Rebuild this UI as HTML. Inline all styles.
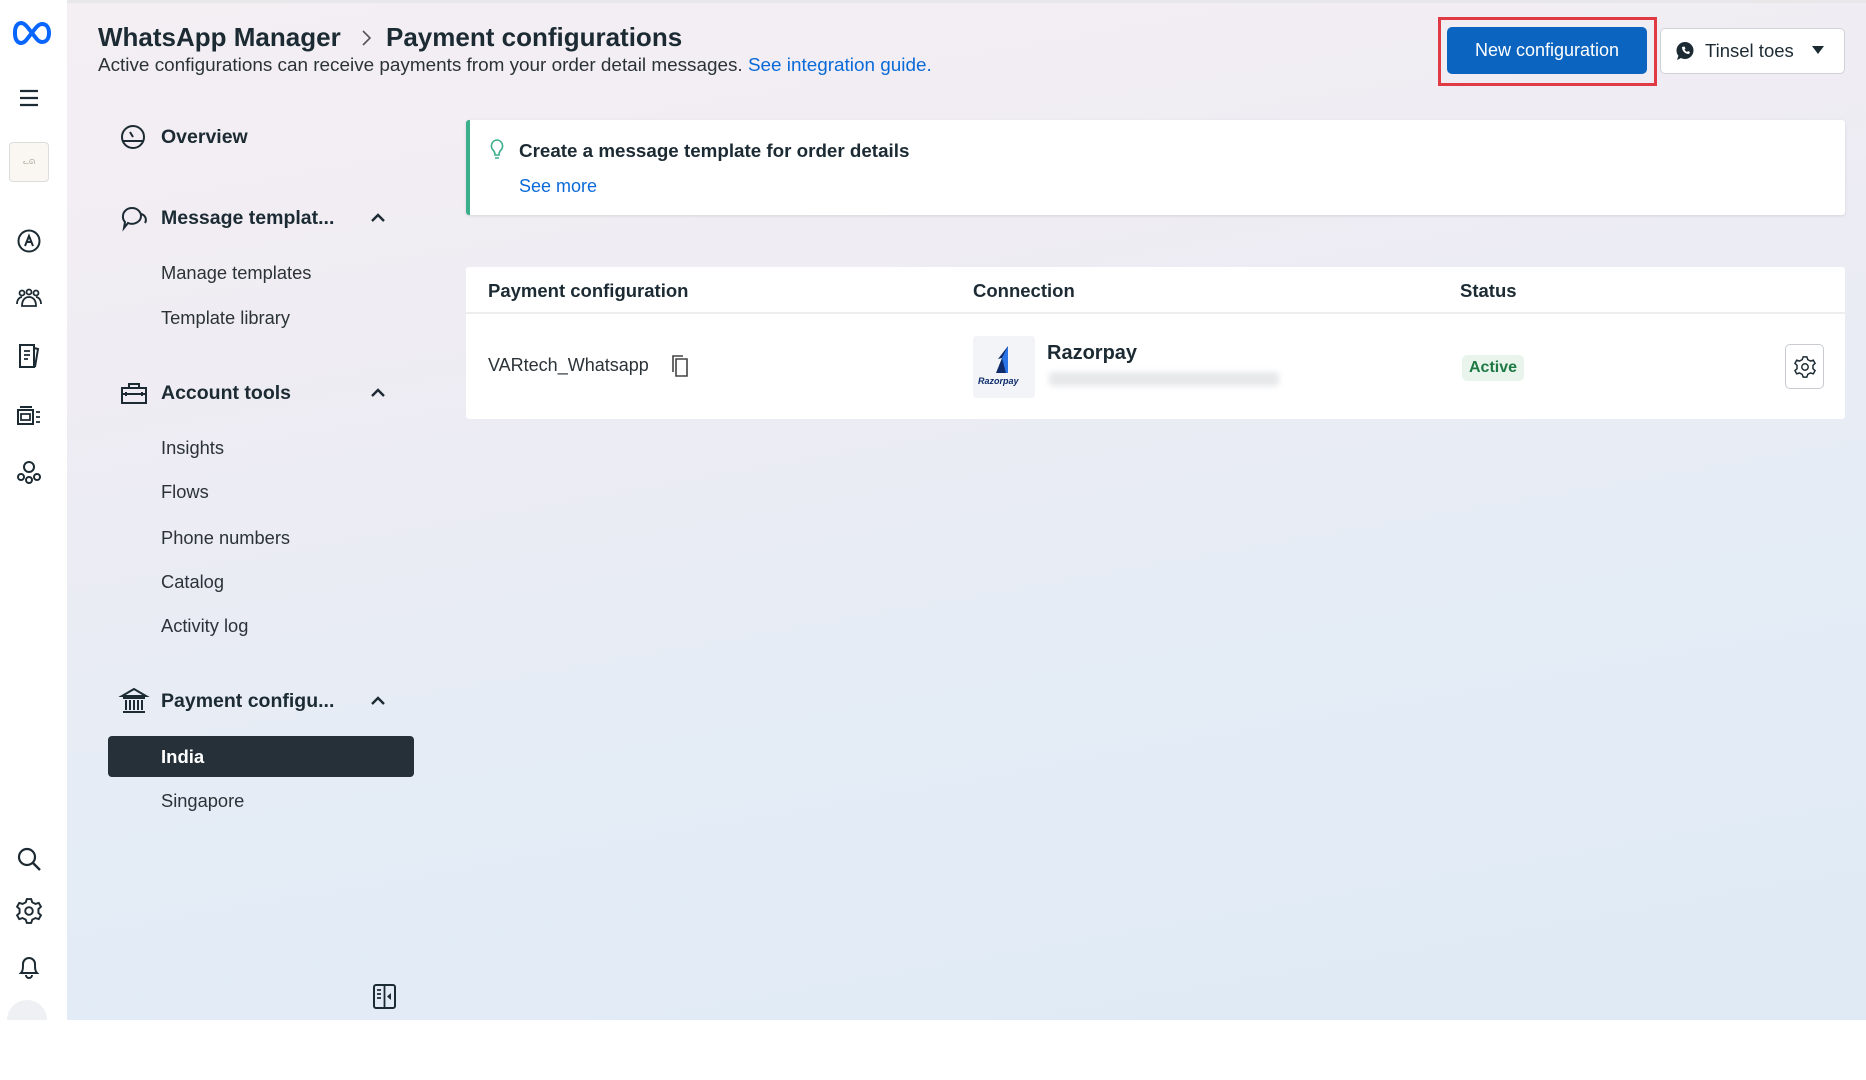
<!DOCTYPE html>
<html><head><meta charset="utf-8"><style>
*{margin:0;padding:0;box-sizing:border-box}
body{width:1866px;height:1080px;overflow:hidden;background:#fff;font-family:"Liberation Sans",sans-serif;color:#1c2b33;position:relative}
.main{position:absolute;left:67px;top:0;width:1799px;height:1020px;background:linear-gradient(170deg,#f4eff3 0%,#efecf3 30%,#e4ecf6 65%,#dfeaf5 100%)}
.topline{position:absolute;left:0;top:0;width:1866px;height:3px;background:#e8e8ea}
.rail{position:absolute;left:0;top:0;width:67px;height:1020px;background:#fff}
.a{position:absolute;white-space:nowrap}
.nav{font-size:18.3px;color:#2b3338}
.sec{font-size:19.5px;font-weight:bold;color:#1c2b33}
svg{position:absolute;overflow:visible}
</style></head><body>
<div class="main"></div>
<div class="topline"></div>
<div class="rail"></div>

<svg style="left:11px;top:20px" width="42" height="24" viewBox="0 0 42 24"><path d="M4 12c0-6 3-9 6-9 4 0 7 5 11 10 4 5 6 9 10 9 4 0 7-3 7-9s-3-9-7-9c-4 0-7 5-11 10-4 5-6 9-10 9-3 0-6-3-6-9z" fill="none" stroke="#0866ff" stroke-width="4"/></svg>
<svg style="left:19px;top:89px" width="20" height="18"><path d="M1 2h18M1 9h18M1 16h18" stroke="#1c2b33" stroke-width="2.2"/></svg>
<div class="a" style="left:9px;top:142px;width:40px;height:40px;border:1px solid #ddd;border-radius:4px;background:#faf7f2;font-size:7px;color:#998;text-align:center;line-height:40px">ᓚᘏ</div>
<svg style="left:17px;top:229px" width="24" height="24"><circle cx="12" cy="12" r="10.5" fill="none" stroke="#1c2b33" stroke-width="2"/><path d="M8 17l4-10 4 10M9.5 13h5" fill="none" stroke="#1c2b33" stroke-width="2"/></svg>
<svg style="left:15px;top:288px" width="28" height="20"><circle cx="7" cy="5" r="2.5" fill="none" stroke="#1c2b33" stroke-width="1.8"/><circle cx="14" cy="4" r="2.5" fill="none" stroke="#1c2b33" stroke-width="1.8"/><circle cx="21" cy="5" r="2.5" fill="none" stroke="#1c2b33" stroke-width="1.8"/><path d="M2 16c0-5 3-7 5-7M26 16c0-5-3-7-5-7M7 18c0-6 3-9 7-9s7 3 7 9z" fill="none" stroke="#1c2b33" stroke-width="1.8"/></svg>
<svg style="left:17px;top:343px" width="24" height="26"><path d="M3 2h14v22H3zM17 5l4 1-3 18" fill="none" stroke="#1c2b33" stroke-width="2"/><path d="M7 8h6M7 12h6M7 16h4" stroke="#1c2b33" stroke-width="1.8"/></svg>
<svg style="left:16px;top:404px" width="26" height="22"><path d="M4 3h12M2 6v14h15V6z" fill="none" stroke="#1c2b33" stroke-width="2"/><path d="M5 10h9v6H5zM20 8h4M20 13h4M20 18h4" fill="none" stroke="#1c2b33" stroke-width="1.8"/></svg>
<svg style="left:16px;top:460px" width="26" height="24"><circle cx="13" cy="7" r="5" fill="none" stroke="#1c2b33" stroke-width="2"/><circle cx="5" cy="17" r="3" fill="none" stroke="#1c2b33" stroke-width="2"/><circle cx="13" cy="20" r="3" fill="none" stroke="#1c2b33" stroke-width="2"/><circle cx="21" cy="17" r="3" fill="none" stroke="#1c2b33" stroke-width="2"/></svg>
<svg style="left:16px;top:846px" width="26" height="26"><circle cx="11" cy="11" r="8" fill="none" stroke="#1c2b33" stroke-width="2.2"/><path d="M17 17l7 7" stroke="#1c2b33" stroke-width="2.4"/></svg>
<svg style="left:16px;top:898px" width="26" height="26" viewBox="0 0 24 24"><path d="M10 1h4l1 3 3 1.5 3-1 2 3.5-2.3 2.2v3.6L23 16l-2 3.5-3-1L15 20l-1 3h-4l-1-3-3-1.5-3 1L1 16l2.3-2.2v-3.6L1 8l2-3.5 3 1L9 4z" fill="none" stroke="#1c2b33" stroke-width="1.8"/><circle cx="12" cy="12" r="3.5" fill="none" stroke="#1c2b33" stroke-width="1.8"/></svg>
<svg style="left:17px;top:954px" width="24" height="26"><path d="M4 19c2-2 2-5 2-9a6 6 0 0112 0c0 4 0 7 2 9z M9 21a3 3 0 006 0" fill="none" stroke="#1c2b33" stroke-width="2"/></svg>
<div class="a" style="left:7px;top:1000px;width:40px;height:40px;border-radius:50%;background:#eef0f3"></div>
<div class="a" style="left:0;top:1020px;width:1866px;height:60px;background:#fff"></div>

<div class="a" style="left:98px;top:22px;font-size:26px;font-weight:bold;color:#1c2b33">WhatsApp Manager</div>
<svg style="left:361px;top:29px" width="12" height="18"><path d="M2 2l7 7-7 7" fill="none" stroke="#555" stroke-width="1.6"/></svg>
<div class="a" style="left:386px;top:22px;font-size:26px;font-weight:bold;color:#1c2b33">Payment configurations</div>
<div class="a" style="left:98px;top:55px;font-size:18.9px;color:#2b3338">Active configurations can receive payments from your order detail messages. <span style="color:#0a6ad8">See integration guide.</span></div>

<div class="a" style="left:1438px;top:17px;width:219px;height:69px;border:3px solid #e03a44"></div>
<div class="a" style="left:1447px;top:27px;width:200px;height:47px;background:#0b64c0;border-radius:5px;color:#fff;font-size:18px;text-align:center;line-height:47px">New configuration</div>
<div class="a" style="left:1660px;top:28px;width:185px;height:46px;background:#fff;border:1px solid #cfd3d8;border-radius:5px"></div>
<svg style="left:1675px;top:41px" width="20" height="20"><circle cx="10" cy="9.5" r="8.5" fill="#1c2b33"/><path d="M2 19l2-6 4 3z" fill="#1c2b33"/><path d="M7 6c0 4 3 7 7 7l1-2-2-1-1 1c-1-.5-2-1.5-2.5-2.5l1-1-1-2z" fill="#fff"/></svg>
<div class="a" style="left:1705px;top:40px;font-size:18.5px;color:#1c2b33">Tinsel toes</div>
<svg style="left:1812px;top:46px" width="12" height="8"><path d="M0 0h12L6 8z" fill="#1c2b33"/></svg>

<svg style="left:120px;top:124px" width="26" height="26"><circle cx="13" cy="13" r="11" fill="none" stroke="#1c2b33" stroke-width="2"/><path d="M2 17h22M13 13l-3-5" stroke="#1c2b33" stroke-width="2"/></svg>
<div class="a sec" style="left:161px;top:126px">Overview</div>
<svg style="left:120px;top:205px" width="28" height="28"><path d="M3 11a9 8 0 1118 0 9 8 0 01-13 7l-4 5 1-6A9 8 0 013 11z" fill="none" stroke="#1c2b33" stroke-width="2"/><path d="M21 9a6 6 0 014 9" fill="none" stroke="#1c2b33" stroke-width="2"/></svg>
<div class="a sec" style="left:161px;top:207px">Message templat...</div>
<svg style="left:371px;top:213px" width="14" height="9"><path d="M1 8l6-6 6 6" fill="none" stroke="#1c2b33" stroke-width="2.4"/></svg>
<div class="a nav" style="left:161px;top:262px">Manage templates</div>
<div class="a nav" style="left:161px;top:307px">Template library</div>
<svg style="left:120px;top:381px" width="28" height="24"><path d="M2 7h24v15H2zM9 7V3h10v4M2 13h24" fill="none" stroke="#1c2b33" stroke-width="2"/><path d="M6 11v4M22 11v4" stroke="#1c2b33" stroke-width="2"/></svg>
<div class="a sec" style="left:161px;top:382px">Account tools</div>
<svg style="left:371px;top:388px" width="14" height="9"><path d="M1 8l6-6 6 6" fill="none" stroke="#1c2b33" stroke-width="2.4"/></svg>
<div class="a nav" style="left:161px;top:437px">Insights</div>
<div class="a nav" style="left:161px;top:481px">Flows</div>
<div class="a nav" style="left:161px;top:527px">Phone numbers</div>
<div class="a nav" style="left:161px;top:571px">Catalog</div>
<div class="a nav" style="left:161px;top:615px">Activity log</div>
<svg style="left:120px;top:688px" width="28" height="26"><path d="M14 1L2 8h24z M3 10h22M3 24h22" fill="none" stroke="#1c2b33" stroke-width="2"/><path d="M6 12v10M10 12v10M14 12v10M18 12v10M22 12v10" stroke="#1c2b33" stroke-width="2"/></svg>
<div class="a sec" style="left:161px;top:690px">Payment configu...</div>
<svg style="left:371px;top:696px" width="14" height="9"><path d="M1 8l6-6 6 6" fill="none" stroke="#1c2b33" stroke-width="2.4"/></svg>
<div class="a" style="left:108px;top:736px;width:306px;height:41px;background:#253039;border-radius:4px"></div>
<div class="a" style="left:161px;top:746px;font-size:18.5px;font-weight:bold;color:#fff">India</div>
<div class="a nav" style="left:161px;top:790px">Singapore</div>
<svg style="left:373px;top:984px" width="24" height="26"><rect x="1" y="1" width="21" height="23" rx="2" fill="none" stroke="#1c2b33" stroke-width="2"/><path d="M11.5 1v23M4 6h4M4 10h4M4 14h4" stroke="#1c2b33" stroke-width="1.8"/><path d="M18 9l-4 3.5 4 3.5z" fill="#1c2b33"/></svg>

<div class="a" style="left:466px;top:120px;width:1379px;height:95px;background:#fff;border-left:4px solid #3bae8c;border-radius:3px;box-shadow:0 1px 3px rgba(0,0,0,.1)"></div>
<svg style="left:490px;top:139px" width="14" height="22"><path d="M7 1a6 6 0 00-4 10c1 1 2 3 2 5h4c0-2 1-4 2-5A6 6 0 007 1zM5 19h4" fill="none" stroke="#3bae8c" stroke-width="1.6"/></svg>
<div class="a" style="left:519px;top:140px;font-size:18.8px;font-weight:bold;color:#1c2b33">Create a message template for order details</div>
<div class="a" style="left:519px;top:176px;font-size:18px;color:#0a6ad8">See more</div>

<div class="a" style="left:466px;top:267px;width:1379px;height:152px;background:#fff;border-radius:3px"></div>
<div class="a" style="left:466px;top:312px;width:1379px;height:2px;background:#eceef0"></div>
<div class="a" style="left:488px;top:280px;font-size:18.5px;font-weight:bold;color:#1c2b33">Payment configuration</div>
<div class="a" style="left:973px;top:280px;font-size:18.5px;font-weight:bold;color:#1c2b33">Connection</div>
<div class="a" style="left:1460px;top:280px;font-size:18.5px;font-weight:bold;color:#1c2b33">Status</div>
<div class="a" style="left:488px;top:355px;font-size:18px;color:#2b3338">VARtech_Whatsapp</div>
<svg style="left:670px;top:355px" width="20" height="22"><path d="M6 4h11v17H6z" fill="none" stroke="#444" stroke-width="1.6"/><path d="M3 17V1h10" fill="none" stroke="#444" stroke-width="1.6"/></svg>
<div class="a" style="left:973px;top:336px;width:62px;height:62px;background:#f2f4f7;border-radius:3px"></div>
<svg style="left:992px;top:345px" width="24" height="30"><path d="M16 1L6 14l4-1-6 15h10z" fill="#0d2b6b"/><path d="M16 1L10 13l4 15h2z" fill="#2a74e8"/></svg>
<div class="a" style="left:978px;top:376px;font-size:9px;font-style:italic;font-weight:bold;color:#0d2b6b">Razorpay</div>
<div class="a" style="left:1047px;top:342px;font-size:20px;font-weight:bold;color:#1c2b33">Razorpay</div>
<div class="a" style="left:1049px;top:372px;width:230px;height:14px;background:#e6e8ea;border-radius:4px;filter:blur(3px)"></div>
<div class="a" style="left:1462px;top:355px;width:62px;height:26px;background:#e9f5ec;border-radius:5px;font-size:16px;font-weight:bold;color:#1d7a45;text-align:center;line-height:26px">Active</div>
<div class="a" style="left:1785px;top:344px;width:39px;height:45px;border:1px solid #c8ccd1;border-radius:5px;background:#fff"></div>
<svg style="left:1794px;top:356px" width="22" height="22" viewBox="0 0 24 24"><path d="M10 1h4l1 3 3 1.5 3-1 2 3.5-2.3 2.2v3.6L23 16l-2 3.5-3-1L15 20l-1 3h-4l-1-3-3-1.5-3 1L1 16l2.3-2.2v-3.6L1 8l2-3.5 3 1L9 4z" fill="none" stroke="#1c2b33" stroke-width="1.6"/><circle cx="12" cy="12" r="3.5" fill="none" stroke="#1c2b33" stroke-width="1.6"/></svg>
</body></html>
